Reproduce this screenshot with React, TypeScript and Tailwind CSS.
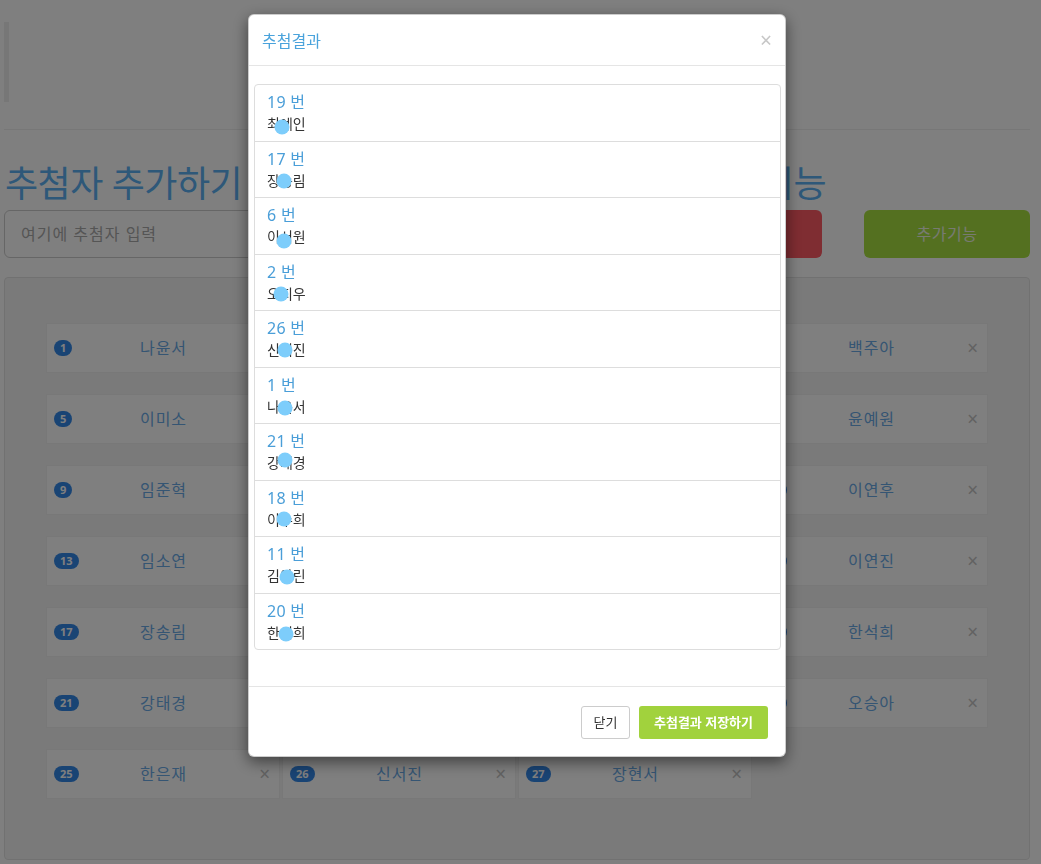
const people = [
  '나윤서', '오지우', '김하준', '백주아',
  '이미소', '이서원', '박민준', '윤예원',
  '임준혁', '정우진', '김아린', '이연후',
  '임소연', '최지호', '박서연', '이연진',
  '장송림', '이수희', '최예인', '한석희',
  '강태경', '윤도현', '조하은', '오승아',
  '한은재', '신서진', '장현서',
]

// 추첨 결과 (번호, 이름, 가림 점 위치 보정)
const picks = [
  { no: 19, name: '최예인', dx: -4, dy: 2 },
  { no: 17, name: '장송림', dx: -2, dy: -1 },
  { no: 6, name: '이서원', dx: -2, dy: 3 },
  { no: 2, name: '오지우', dx: -5, dy: -1 },
  { no: 26, name: '신서진', dx: -1, dy: -1 },
  { no: 1, name: '나윤서', dx: -1, dy: 0 },
  { no: 21, name: '강태경', dx: -1, dy: -4 },
  { no: 18, name: '이수희', dx: -2, dy: -2 },
  { no: 11, name: '김아린', dx: 1, dy: 0 },
  { no: 20, name: '한석희', dx: 0, dy: 0 },
]

function PersonCard({ no, name }: { no: number; name: string }) {
  return (
    <div className="grid h-[50px] grid-cols-[1fr_auto_1fr] items-center border border-[#f0f0f0] bg-white pl-[7px] pr-[9px]">
      <span className="justify-self-start rounded-full bg-[#3388e8] px-[6px] text-[11px] leading-4 font-bold text-white">
        {no}
      </span>
      <span className="pl-[3px] text-base leading-5 tracking-[1px] text-[#6aaae6]">{name}</span>
      <span className="justify-self-end text-[19px] leading-5 text-[#c4c4c4]">×</span>
    </div>
  )
}

function HiddenName({ name, dx, dy }: { name: string; dx: number; dy: number }) {
  return (
    <span>
      {name[0]}
      <span className="relative inline-block">
        {name[1]}
        <span
          className="absolute top-1/2 left-1/2 h-[15px] w-[15px] -translate-x-1/2 -translate-y-1/2 rounded-full bg-[#7dcdfb]"
          style={{ marginLeft: dx, marginTop: dy + 1 }}
        />
      </span>
      {name[2]}
    </span>
  )
}

export default function App() {
  return (
    <div className="relative min-h-[864px] bg-white font-['Noto_Sans','Noto_Sans_CJK_KR',sans-serif]">
      <div className="pl-1 pr-[11px] pt-[22px]">
        <div className="h-20 border-l-[5px] border-[#eeeeee]" />
        <hr className="mt-[27px] border-[#eeeeee]" />

        <div className="mt-[34px] flex items-end justify-between">
          <h2 className="pl-px text-[36px] leading-10 tracking-[-0.5px] text-[#5cb0f2]">추첨자 추가하기</h2>
          <h2 className="mr-[204px] text-[36px] leading-10 tracking-[-0.5px] text-[#5cb0f2]">추첨기능</h2>
        </div>

        <div className="mt-[6px] flex h-12">
          <input
            type="text"
            placeholder="여기에 추첨자 입력"
            className="h-12 w-[636px] rounded-md border border-[#cccccc] px-4 text-base tracking-[1px] text-[#555] placeholder:text-[#aaaaaa] focus:outline-none"
          />
          <button className="ml-5 w-[162px] rounded-md bg-[#ff5a64] text-base text-white">추첨하기</button>
          <button className="ml-[42px] w-[166px] rounded-md bg-[#a8e040] text-base tracking-[0.5px] text-[#f0f6e4]">추가기능</button>
        </div>

        <div className="mt-[19px] rounded border border-[#e3e3e3] bg-[#f5f5f5] px-[41px] pt-[45px] pb-[60px]">
          <div className="grid grid-cols-4 gap-x-[2px] gap-y-[21px]">
            {people.map((name, i) => (
              <PersonCard key={i} no={i + 1} name={name} />
            ))}
          </div>
        </div>
      </div>

      <div className="fixed inset-0 bg-black/50" />

      <div className="fixed top-[14px] left-[248px] w-[538px] rounded-md border border-black/20 bg-white shadow-[0_5px_15px_rgba(0,0,0,0.5)]">
        <div className="flex h-[51px] items-center justify-between border-b border-[#e5e5e5] pr-[13px] pl-[13px]">
          <h4 className="pt-[2px] text-base leading-5 text-[#4aa3dc]">추첨결과</h4>
          <button className="text-[21px] leading-none text-[#c7c7c7]">×</button>
        </div>

        <div className="pt-[18px] pr-[4px] pb-[36px] pl-[5px]">
          <ul className="rounded border border-[#dddddd]">
            {picks.map((p, i) => (
              <li key={p.no} className={(i > 0 ? 'border-t border-[#dddddd] ' : '') + 'px-[12px] pt-2 pb-[7.5px]'}>
                <div className="text-base leading-[18px] tracking-[0.3px] text-[#4a9ed8]">{p.no} 번</div>
                <div className="mt-1 text-[14px] leading-[18px] text-[#333333]">
                  <HiddenName name={p.name} dx={p.dx} dy={p.dy} />
                </div>
              </li>
            ))}
          </ul>
        </div>

        <div className="flex justify-end gap-[9px] border-t border-[#e5e5e5] pt-[19px] pr-[17px] pb-[17px]">
          <button className="h-[33px] w-[49px] rounded-[3px] border border-[#cccccc] bg-white text-[13px] text-[#333333]">
            닫기
          </button>
          <button className="h-[33px] w-[129px] rounded-[3px] bg-[#a1d23d] text-[13px] font-bold text-white">
            추첨결과 저장하기
          </button>
        </div>
      </div>
    </div>
  )
}
